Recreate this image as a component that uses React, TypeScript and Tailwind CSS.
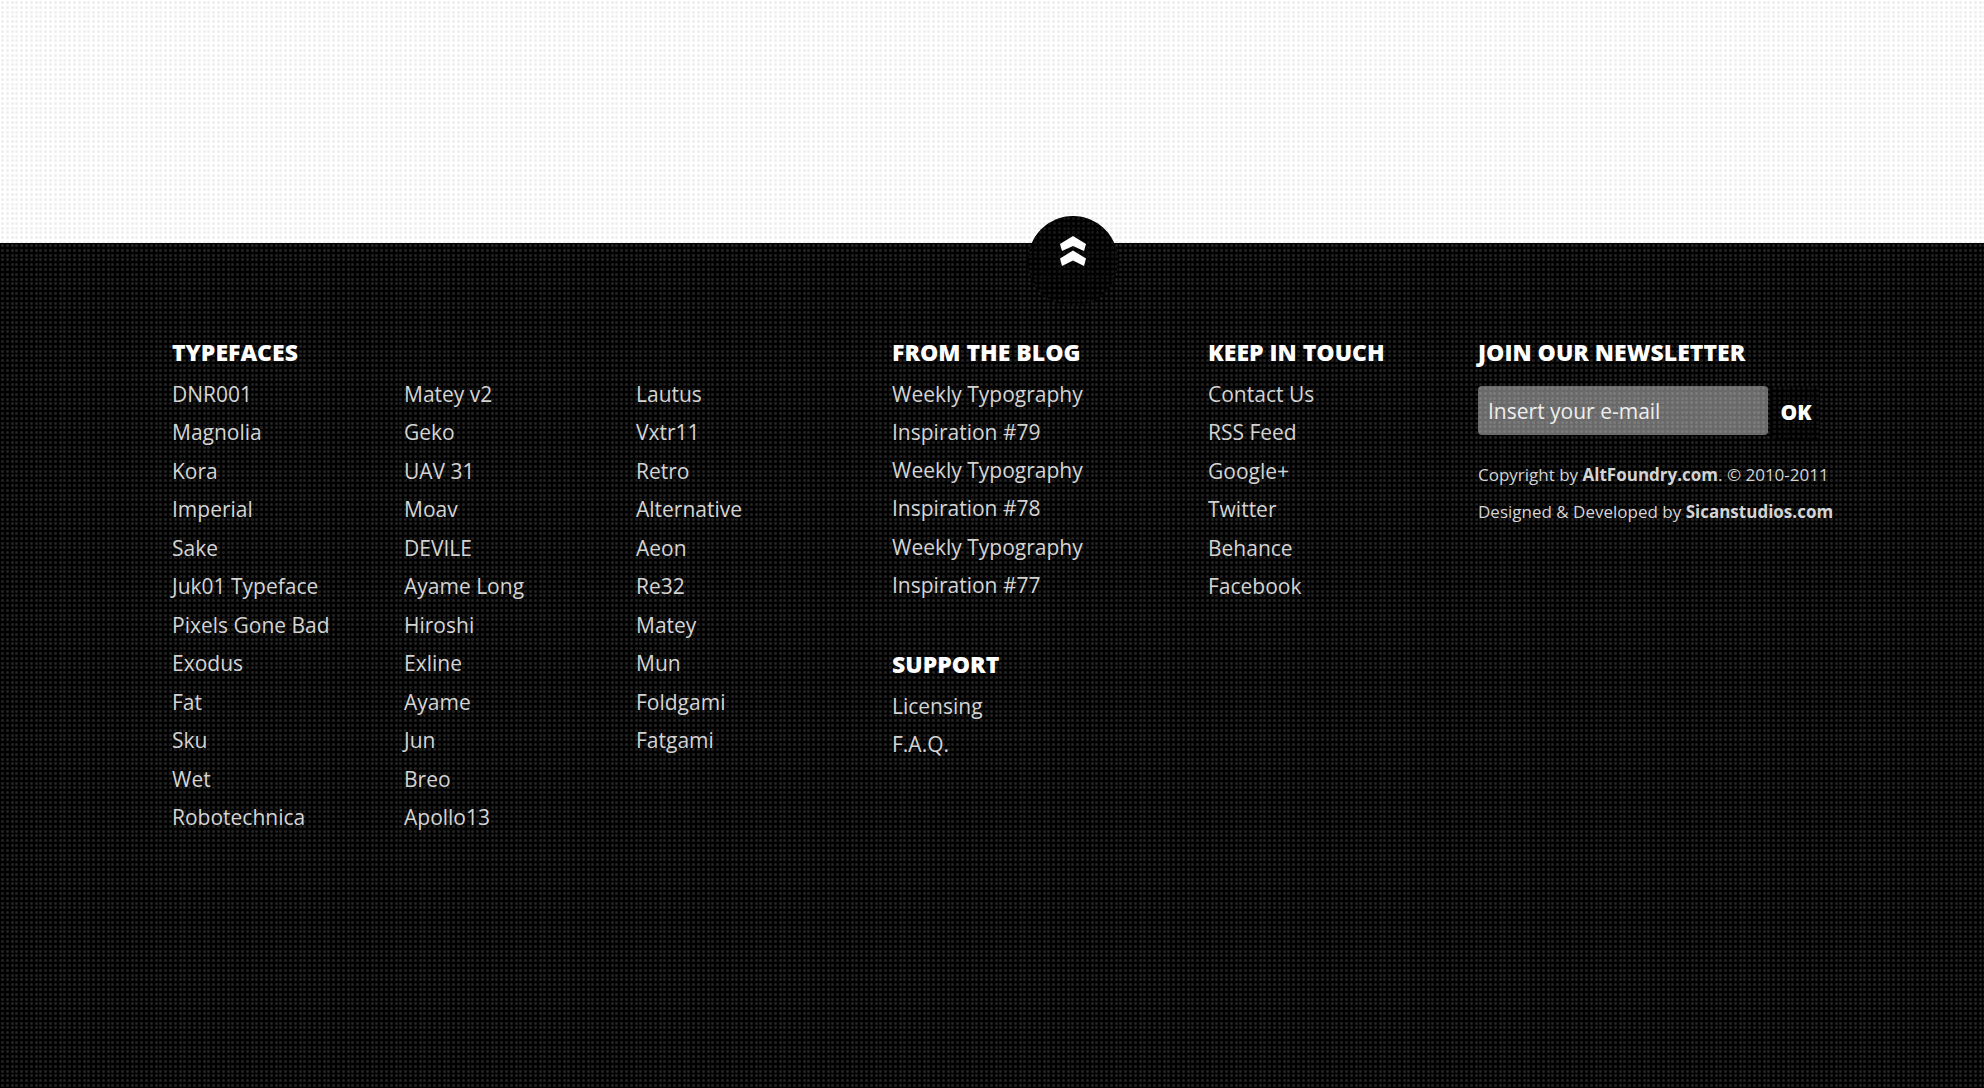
import React, { useId } from 'react';

const typefaces = [
  ['DNR001', 'Magnolia', 'Kora', 'Imperial', 'Sake', 'Juk01 Typeface', 'Pixels Gone Bad', 'Exodus', 'Fat', 'Sku', 'Wet', 'Robotechnica'],
  ['Matey v2', 'Geko', 'UAV 31', 'Moav', 'DEVILE', 'Ayame Long', 'Hiroshi', 'Exline', 'Ayame', 'Jun', 'Breo', 'Apollo13'],
  ['Lautus', 'Vxtr11', 'Retro', 'Alternative', 'Aeon', 'Re32', 'Matey', 'Mun', 'Foldgami', 'Fatgami'],
];
const posts = ['Weekly Typography Inspiration #79', 'Weekly Typography Inspiration #78', 'Weekly Typography Inspiration #77'];
const support = ['Licensing', 'F.A.Q.'];
const contact = ['Contact Us', 'RSS Feed', 'Google+', 'Twitter', 'Behance', 'Facebook'];

const steps = [0, 5, 10, 14, 19];

function Halftone({ className }: { className: string }) {
  const id = useId();
  return (
    <svg aria-hidden="true" className={'pointer-events-none absolute inset-0 size-full ' + className}>
      <defs>
        <pattern id={id} width="24" height="24" patternUnits="userSpaceOnUse">
          {steps.map((y) =>
            steps.map((x) => (
              <g key={x + '-' + y} fill="currentColor" shapeRendering="crispEdges">
                <rect x={x + 1} y={y + 1} width="3" height="3" opacity="0.5" />
                <rect x={x + 2} y={y + 1} width="1" height="3" opacity="0.5" />
                <rect x={x + 1} y={y + 2} width="3" height="1" opacity="0.5" />
              </g>
            )),
          )}
        </pattern>
      </defs>
      <rect width="100%" height="100%" fill={'url(#' + id + ')'} />
    </svg>
  );
}

function Heading({ children }: { children: React.ReactNode }) {
  return <h2 className="whitespace-nowrap text-[23px] leading-8 font-extrabold text-white">{children}</h2>;
}

function Links({ items }: { items: string[] }) {
  return (
    <ul className="text-[21px] leading-[38px]">
      {items.map((item) => (
        <li key={item} className="even:pb-px">
          <a href="#" className="hover:text-white">{item}</a>
        </li>
      ))}
    </ul>
  );
}

export default function App() {
  return (
    <div className="flex min-h-screen flex-col bg-black font-['Open_Sans','Noto_Sans',sans-serif]">
      <main className="relative h-[243px] bg-white">
        <Halftone className="text-[#ebebeb]" />
      </main>
      <footer className="relative grow bg-black pt-[93px] pr-10 pb-10 pl-[172px] text-[#d4d4d4]">
        <Halftone className="text-[#2a2a2a]" />
        <a href="#" aria-label="Back to top" className="absolute -top-[27px] left-[1028px] size-[90px] overflow-hidden rounded-full bg-black">
          <Halftone className="text-[#1c1c1c]" />
          <svg viewBox="0 0 90 90" className="relative size-full" fill="white" aria-hidden="true">
            <path d="M45 20 58 28 56 35 45 30 34 35 32 28Z" />
            <path d="M45 34.500 58 42.500 56 50 45 44.500 34 50 32 42.500Z" />
          </svg>
        </a>
        <div className="relative flex flex-wrap gap-y-10">
          <section className="w-[720px] shrink-0">
            <Heading>TYPEFACES</Heading>
            <div className="mt-[7px] grid grid-cols-[232px_232px_1fr]">
              {typefaces.map((list) => <Links key={list[0]} items={list} />)}
            </div>
          </section>
          <div className="w-[316px] shrink-0">
            <section>
              <Heading>FROM THE BLOG</Heading>
              <div className="mt-[7px] w-[210px]"><Links items={posts} /></div>
            </section>
            <section className="mt-11">
              <Heading>SUPPORT</Heading>
              <div className="mt-[7px]"><Links items={support} /></div>
            </section>
          </div>
          <section className="w-[270px] shrink-0">
            <Heading>KEEP IN TOUCH</Heading>
            <div className="mt-[7px]"><Links items={contact} /></div>
          </section>
          <section className="grow">
            <Heading>JOIN OUR NEWSLETTER</Heading>
            <form className="mt-[18px] flex gap-1" onSubmit={(e) => e.preventDefault()}>
              <div className="relative h-[49px] w-[290px] overflow-hidden rounded bg-[#696969]">
                <Halftone className="text-[#808080]" />
                <input type="email" aria-label="E-mail" placeholder="Insert your e-mail" className="relative size-full bg-transparent px-[10px] text-[21px] text-white outline-none placeholder:text-[#eeeeee]" />
              </div>
              <button type="submit" className="relative h-[53px] w-12 rounded bg-black text-[21px] font-extrabold text-white">
                <Halftone className="text-[#1c1c1c]" />
                <span className="relative">OK</span>
              </button>
            </form>
            <div className="mt-[17px] whitespace-nowrap text-[17px] leading-[37px]">
              <p>Copyright by <a href="#" className="font-bold">AltFoundry.com</a>. © 2010-2011</p>
              <p>Designed &amp; Developed by <a href="#" className="font-bold">Sicanstudios.com</a></p>
            </div>
          </section>
        </div>
      </footer>
    </div>
  );
}
